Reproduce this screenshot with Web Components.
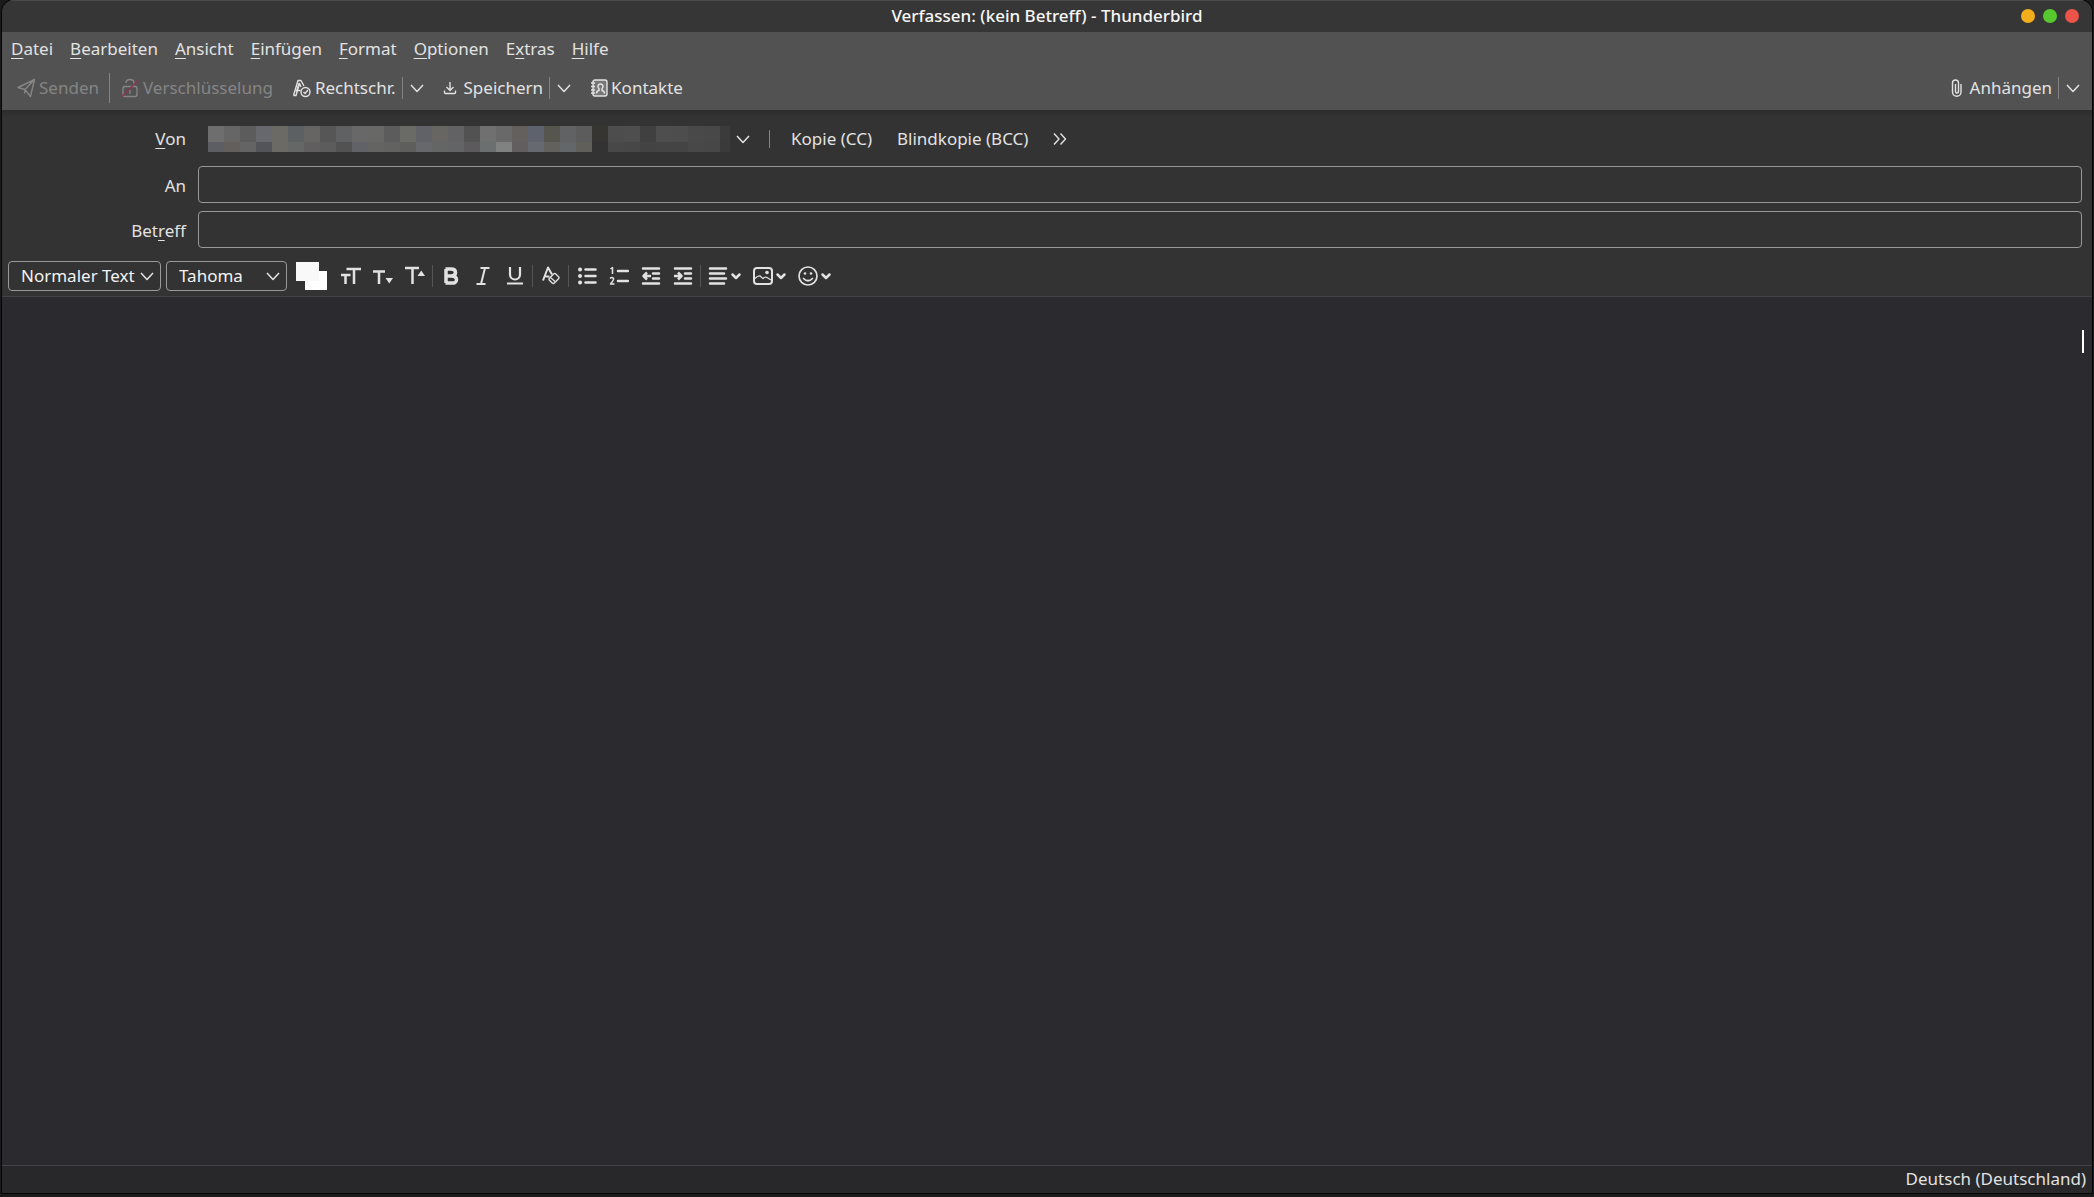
<!DOCTYPE html>
<html lang="de">
<head>
<meta charset="utf-8">
<title>Verfassen: (kein Betreff) - Thunderbird</title>
<style>
html, body { margin: 0; height: 100%; background: #1b1b1b; }
body { font: 17px/22px "Noto Sans", "Open Sans", sans-serif; color: #e2e2e2; }
</style>
</head>
<body>
<compose-window></compose-window>
<script>
const ICONS = {
  send: [20, 20, '<path d="M2 9.500 18.500 1.500 14.500 18.500 9 11.500zM9 11.500 18.500 1.500M9 11.500 8.500 15.500"/>'],
  lock: [20, 20, '<rect x="3" y="8.500" width="14" height="10" rx="2"/><path d="M5 8.500H3.500M6 5q0-3.500 4-3.500T14 5v3.500M10 12v4"/><path d="M2 18.500 18.500 2" stroke="#8c3550" stroke-width="1.500"/>'],
  spell: [20, 20, '<path d="M1.500 17.500 6 2.500h3L12 8M1.500 17.500h2.500l3.500-12 1.500 3.500M5.500 12.500h3" /><path d="M4 14 7 5" stroke-width="1"/><circle cx="13.500" cy="14" r="4.500"/><path d="m11.500 14 1.500 1.500 3-3.500"/>'],
  save: [14, 14, '<path d="M7 1v8M3.500 6 7 9.500 10.500 6M1.500 9.500v2q0 1 1 1h9q1 0 1-1v-2"/>'],
  contacts: [18, 18, '<rect x="3" y="1" width="14" height="16" rx="2" fill="#777"/><path d="M1 4h4M1 7.500h4M1 11h4M1 14h4"/><path d="M6.500 14.500q0-2.500 2.500-3V9.500a2.500 2.500 0 1 1 3 0v2q2.500.5 2.500 3" stroke-width="1.500"/>'],
  clip: [12, 20, '<path d="M4.500 6v7.500a1.500 1.500 0 0 0 3 0V5a3 3 0 0 0-6 0v9a4 4 0 0 0 8.500 0V6"/>'],
  down: [14, 14, '<path d="m1 4 6 6.500L13 4" stroke-width="1.500"/>'],
  more: [14, 14, '<path d="m1 1.500 5 5.500-5 5.500M7.500 1.500l5 5.500-5 5.500"/>'],
  caret: [12, 20, '<path d="m2.500 8.500 3.500 3.500 3.500-3.500" stroke-width="2.500" stroke-linecap="round"/>'],
  size: [20, 20, '<path d="M5.500 3h14.500M13 3v15M0 9h9.500M4.500 9v9" stroke-width="2.500"/>'],
  smaller: [20, 20, '<path d="M0 5.500h12M6 5.500V18" stroke-width="2.500"/><path d="M12.500 12h7.500l-3.750 5.500z" fill="currentColor" stroke="none"/>'],
  larger: [20, 20, '<path d="M0 2h14M7.500 2v16" stroke-width="2.500"/><path d="M12.500 10h7.500l-3.750-5.500z" fill="currentColor" stroke="none"/>'],
  bold: [20, 20, '<path d="M4.500 3H10q4.500 0 4.500 3.500T10 10H5.500M10 10q5.500 0 5.500 3.750T10 17H4.500M5 3v14" stroke-width="3.500"/>'],
  italic: [20, 20, '<path d="M7.500 2h9M3.500 18h9M12 2 8 18" stroke-width="2"/>'],
  underline: [20, 20, '<path d="M5 1v7.500a5 5 0 0 0 10 0V1M2 17.500h16" stroke-width="2.200"/>'],
  clear: [20, 20, '<path d="m2 14.500 5-13 4 7M4.500 10.500h4" stroke-width="2"/><rect x="8.500" y="9" width="9" height="7" rx="1.500" transform="rotate(-45 13 12.500)"/><path d="m9.500 11.500 4.500 4"/>'],
  bullets: [20, 20, '<path d="M8.500 3.500h10M8.500 10h10M8.500 16.500h10" stroke-width="2.500" stroke-linecap="round"/><path d="M3 3.500h.1M3 10h.1M3 16.500h.1" stroke-width="4" stroke-linecap="round"/>'],
  numbers: [20, 20, '<path d="M9 5h10M9 15h10" stroke-width="2.500" stroke-linecap="round"/><path d="m1.500 3 2-1.500V8M1 12.500q2-2 3.500 0 .5 1.500-3 5.500h4" stroke-width="1.500"/>'],
  outdent: [20, 20, '<path d="M2 2.500h16M12 7.500h6M12 12.500h6M2 17.500h16" stroke-width="2.500" stroke-linecap="round"/><path d="M2 10h8M6 6.500 2.500 10 6 13.500" stroke-width="2.500"/>'],
  indent: [20, 20, '<path d="M2 2.500h16M12 7.500h6M12 12.500h6M2 17.500h16" stroke-width="2.500" stroke-linecap="round"/><path d="M1 10h7.500M5 6.500 8.500 10 5 13.500" stroke-width="2.500"/>'],
  align: [20, 20, '<path d="M2 2.500h16M2 7.500h14M2 12.500h16M2 17.500h14" stroke-width="2.500" stroke-linecap="round"/>'],
  image: [20, 20, '<rect x="1" y="2" width="18" height="16" rx="3" stroke-width="2"/><circle cx="14" cy="6.500" r="1.800" fill="currentColor" stroke="none"/><path d="M2 12.500q3-3 5-2.500l3 2.500q2-2 4-1l4 2.500" stroke-width="1.300"/>'],
  smile: [20, 20, '<circle cx="10" cy="10" r="9" stroke-width="1.700"/><path d="M5.500 12.500q4.500 4.500 9 0" stroke-width="1.700" stroke-linecap="round"/><circle cx="7" cy="7.500" r="1.300" fill="currentColor" stroke="none"/><circle cx="13" cy="7.500" r="1.300" fill="currentColor" stroke="none"/>']
};

const define = (name, html, setup) => {
  const template = document.createElement('template');
  template.innerHTML = html;
  customElements.define(name, class extends HTMLElement {
    constructor() {
      super();
      this.attachShadow({ mode: 'open' }).append(template.content.cloneNode(true));
    }
    connectedCallback() { if (setup) setup(this, this.shadowRoot); }
  });
};

const BUTTON = `button { display: flex; align-items: center; margin: 0; border: 0; background: none;
  color: inherit; font: inherit; white-space: nowrap; cursor: default; }
  button:focus-visible { outline: 1px solid #9ac; }`;

define('ui-icon', `<style>:host { display: block; flex: none; } svg { display: block; fill: none; stroke: currentColor; stroke-width: 1.4; stroke-linejoin: round; }</style>`,
  (host, root) => {
    const icon = ICONS[host.getAttribute('name')];
    if (!icon) return;
    const [w, h, body] = icon;
    root.innerHTML += `<svg width="${w}" height="${h}" viewBox="0 0 ${w} ${h}" aria-hidden="true">${body}</svg>`;
  });

define('ui-divider', `<style>:host { display: block; flex: none; width: 1px; height: 22px; background: var(--divider, #858585); }</style>`);

define('title-bar', `<style>
  :host { display: grid; grid-template-columns: 1fr auto 1fr; align-items: center; height: 31px; background: #363636;
    border-top: 1px solid #4a4a4a; color: #f6f6f6; }
  h1 { grid-column: 2; margin: 0; padding-bottom: 2px; font: inherit; font-weight: 500; }
  nav { display: flex; justify-content: flex-end; gap: 8px; padding: 0 13px 2px 0; }
  button { width: 14px; height: 14px; padding: 0; border: 0; border-radius: 50%; background: #f3ae1b; }
  .max { background: #57c92f; } .close { background: #ec5349; }
</style><h1><slot></slot></h1><nav><button aria-label="Minimieren"></button><button class="max" aria-label="Maximieren"></button><button class="close" aria-label="Schließen"></button></nav>`);

define('menu-bar', `<style>
  :host { display: flex; height: 34px; align-items: center; gap: 17px; padding: 0 9px; }
  ${BUTTON} button { display: block; padding: 0; }
  u { text-underline-offset: 3px; text-decoration-thickness: 1px; text-decoration-skip-ink: none; }
</style>
<button><u>D</u>atei</button><button><u>B</u>earbeiten</button><button><u>A</u>nsicht</button><button><u>E</u>infügen</button>
<button><u>F</u>ormat</button><button><u>O</u>ptionen</button><button>E<u>x</u>tras</button><button><u>H</u>ilfe</button>`);

define('tool-button', `<style>
  :host { display: flex; align-items: center; }
  :host([disabled]) { color: #858585; }
  ${BUTTON} button { gap: var(--icon-gap, 3px); padding: 4px 0; }
  .menu { display: none; padding: 4px 0; }
  ui-divider { display: none; margin: 0 7px 0 6px; }
  :host([split]) .menu, :host([split]) ui-divider { display: block; }
</style><button class="main"><slot></slot></button><ui-divider></ui-divider><button class="menu" aria-label="Optionen"><ui-icon name="down"></ui-icon></button>`,
  (host, root) => {
    const main = root.querySelector('.main');
    const icon = document.createElement('ui-icon');
    icon.setAttribute('name', host.getAttribute('icon'));
    main.prepend(icon);
    main.disabled = host.hasAttribute('disabled');
  });

define('compose-toolbar', `<style>
  :host { display: flex; align-items: center; height: 44px; padding: 0 12px 0 14px; }
  .group { display: flex; align-items: center; gap: 19px; }
  .tall { height: 30px; margin: 0 10px; }
  .wide, .end { --icon-gap: 7px; }
  .end { margin-left: auto; }
</style>
<tool-button icon="send" disabled>Senden</tool-button><ui-divider class="tall"></ui-divider>
<div class="group"><tool-button icon="lock" disabled>Verschlüsselung</tool-button><tool-button icon="spell" split>Rechtschr.</tool-button>
<tool-button class="wide" icon="save" split>Speichern</tool-button><tool-button icon="contacts">Kontakte</tool-button></div>
<tool-button class="end" icon="clip" split>Anhängen</tool-button>`);

define('redacted-address', `<style>:host { display: block; } svg { display: block; }</style>`,
  (host, root) => {
    const rows = [
      '6e6e6e 666666 5c5c5c 66686e 6b6a64 5c6063 676563 565656 5f6163 686868 686866 5c5c5c 6a6a66 606268 676663 626264 525252 707070 696969 63605e 5e626c 57564e 606264 5c5c5c 373532 4d4d4d 4e4e4e 404040 4e4e4e 4d4d4d 494949 484848 3b3b3b',
      '5c5e63 625f5d 646464 52545a 6b6a63 646765 605e5e 5c5c5c 525252 606268 646462 626260 5e5e5c 66686c 646666 626466 5c5a5c 6c6f70 7f8280 625e60 66696f 63615e 646769 605f5a 333333 484848 474747 434343 444444 444444 484848 474747 3a3a3a'
    ];
    const cells = rows.map((row, y) => row.split(' ').map((c, x) =>
      `<rect x="${x * 16}" y="${y * 16}" width="${x === 32 ? 10 : 16}" height="${y ? 10 : 16}" fill="#${c}"/>`).join('')).join('');
    root.innerHTML += `<svg width="522" height="26" shape-rendering="crispEdges" aria-hidden="true">${cells}</svg>`;
  });

define('address-form', `<style>
  :host { display: grid; grid-template-columns: 184px 1fr; column-gap: 12px; align-items: center; padding: 10px 10px 0 0;
    background: linear-gradient(#2c2c2c, #333 8px); }
  label { justify-self: end; padding-bottom: 6px; }
  u { text-underline-offset: 3px; text-decoration-thickness: 1px; text-decoration-skip-ink: none; }
  input { box-sizing: border-box; width: 100%; height: 37px; margin: 0 0 8px; padding: 0 8px; border: 1px solid #999; border-radius: 4px;
    background: #333; color: inherit; font: inherit; outline: none; }
  .from { padding-bottom: 8px; }
  .row { display: flex; align-items: center; height: 38px; margin-bottom: 8px; padding-left: 10px; }
  .identity { display: grid; grid-template-columns: auto 14px; column-gap: 6px; align-items: center; }
  .identity > * { grid-row: 1; }
  select { grid-column: 1 / 3; align-self: stretch; appearance: none; border: 0; background: none; color: inherit; font: inherit; }
  redacted-address { grid-column: 1; } .identity ui-icon { grid-column: 2; }
  ui-divider { height: 18px; margin: 0 21px 0 19px; }
  ${BUTTON} button { padding: 0; margin-right: 25px; }
</style>
<label class="from" for="from"><u>V</u>on</label>
<div class="row"><div class="identity"><redacted-address></redacted-address><ui-icon name="down"></ui-icon><select id="from"><option></option></select></div>
<ui-divider></ui-divider><button>Kopie (CC)</button><button>Blindkopie (BCC)</button><button aria-label="Weitere Felder"><ui-icon name="more"></ui-icon></button></div>
<label for="to">An</label><input id="to" type="text">
<label for="subject">Bet<u>r</u>eff</label><input id="subject" type="text">`);

define('format-bar', `<style>
  :host { display: flex; align-items: center; height: 39px; padding: 0 6px 1px; border-bottom: 1px solid #424246; background: #333; --divider: #555; }
  .select { display: grid; grid-template-columns: 1fr 14px; align-items: center; margin-right: 5px; }
  .select > * { grid-row: 1; }
  .select ui-icon { grid-column: 2; margin-left: -7px; pointer-events: none; }
  select { grid-column: 1 / 3; box-sizing: border-box; width: 100%; height: 30px; padding: 0 12px; appearance: none; border: 1px solid #999; border-radius: 4px;
    background: #333; color: #f2f2f2; font: inherit; }
  .style { width: 153px; } .font { width: 121px; }
  ${BUTTON} button { justify-content: center; width: 32px; height: 30px; padding: 0; }
  .colors { width: 32px; margin: 0 7px 0 4px; }
  .menu { width: auto; padding: 0 6px 0 0; gap: 2px; margin-left: 5px; }
  ui-divider { margin: 0 2px 0 1px; }
</style>
<div class="select style"><select aria-label="Absatzformat"><option>Normaler Text</option></select><ui-icon name="down"></ui-icon></div>
<div class="select font"><select aria-label="Schriftart"><option>Tahoma</option></select><ui-icon name="down"></ui-icon></div>
<button class="colors" aria-label="Farben"><svg width="32" height="28" aria-hidden="true"><path d="M9 9h22v19H9z" fill="#fff"/><path d="M0 0h23v19H0z" fill="#f9f9fa"/></svg></button>
<button aria-label="Schriftgröße"><ui-icon name="size"></ui-icon></button><button aria-label="Kleiner"><ui-icon name="smaller"></ui-icon></button><button aria-label="Größer"><ui-icon name="larger"></ui-icon></button>
<ui-divider></ui-divider>
<button aria-label="Fett"><ui-icon name="bold"></ui-icon></button><button aria-label="Kursiv"><ui-icon name="italic"></ui-icon></button><button aria-label="Unterstrichen"><ui-icon name="underline"></ui-icon></button>
<ui-divider></ui-divider>
<button aria-label="Formatierung entfernen"><ui-icon name="clear"></ui-icon></button>
<ui-divider></ui-divider>
<button aria-label="Aufzählung"><ui-icon name="bullets"></ui-icon></button><button aria-label="Nummerierung"><ui-icon name="numbers"></ui-icon></button><button aria-label="Einzug verkleinern"><ui-icon name="outdent"></ui-icon></button><button aria-label="Einzug vergrößern"><ui-icon name="indent"></ui-icon></button>
<ui-divider></ui-divider>
<button class="menu" aria-label="Ausrichtung"><ui-icon name="align"></ui-icon><ui-icon name="caret"></ui-icon></button>
<button class="menu" aria-label="Einfügen"><ui-icon name="image"></ui-icon><ui-icon name="caret"></ui-icon></button>
<button class="menu" aria-label="Smiley"><ui-icon name="smile"></ui-icon><ui-icon name="caret"></ui-icon></button>`);

define('message-editor', `<style>
  :host { display: grid; background: #2b2a2f; }
  textarea, i { grid-area: 1 / 1; }
  textarea { resize: none; margin: 0; padding: 32px 10px; border: 0; outline: 0; background: none; color: inherit; font: inherit; }
  i { justify-self: end; width: 2px; height: 23px; margin: 33px 8px 0 0; background: #fff; }
</style><textarea dir="rtl" aria-label="Nachricht"></textarea><i></i>`);

define('status-bar', `<style>
  :host { display: flex; justify-content: flex-end; align-items: center; height: 25px; padding: 0 6px 2px; border-top: 1px solid #424147; background: #28282a; }
  ${BUTTON} button { padding: 0; }
</style><button><slot></slot></button>`);

define('compose-window', `<style>
  :host { display: flex; flex-direction: column; box-sizing: border-box; height: 100vh; padding: 0 2px 4px; }
  .frame { display: flex; flex-direction: column; flex: 1; overflow: hidden; border-radius: 12px 12px 0 0; box-shadow: 0 0 0 1px #050505; }
  .bars { background: #525252; }
  message-editor { flex: 1; }
</style>
<div class="frame"><title-bar>Verfassen: (kein Betreff) - Thunderbird</title-bar>
<div class="bars"><menu-bar></menu-bar><compose-toolbar></compose-toolbar></div>
<address-form></address-form><format-bar></format-bar><message-editor></message-editor>
<status-bar>Deutsch (Deutschland)</status-bar></div>`);
</script>
</body>
</html>
